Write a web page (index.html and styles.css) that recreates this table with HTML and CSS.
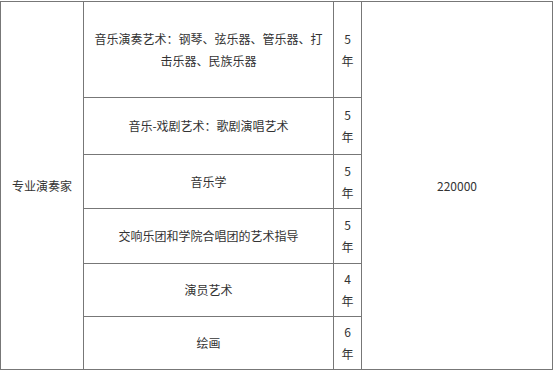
FILE: index.html
```html
<!DOCTYPE html>
<html lang="zh-CN">
<head>
<meta charset="utf-8">
<title>专业演奏家</title>
<link rel="stylesheet" href="styles.css">
</head>
<body>
<table class="tuition">
  <colgroup>
    <col class="c-cat">
    <col class="c-major">
    <col class="c-years">
    <col class="c-fee">
  </colgroup>
  <tbody>
    <tr class="r1">
      <td class="cat" rowspan="6">专业演奏家</td>
      <td class="major">音乐演奏艺术：钢琴、弦乐器、管乐器、打击乐器、民族乐器</td>
      <td class="years">5年</td>
      <td class="fee" rowspan="6">220000</td>
    </tr>
    <tr class="r2">
      <td class="major">音乐-戏剧艺术：歌剧演唱艺术</td>
      <td class="years">5年</td>
    </tr>
    <tr class="r3">
      <td class="major">音乐学</td>
      <td class="years">5年</td>
    </tr>
    <tr class="r4">
      <td class="major">交响乐团和学院合唱团的艺术指导</td>
      <td class="years">5年</td>
    </tr>
    <tr class="r5">
      <td class="major">演员艺术</td>
      <td class="years">4年</td>
    </tr>
    <tr class="r6">
      <td class="major">绘画</td>
      <td class="years">6年</td>
    </tr>
  </tbody>
</table>
</body>
</html>
```

FILE: styles.css
```css
html, body {
  margin: 0;
  padding: 0;
  background: #fff;
}

body {
  padding-top: 1px;
  font-family: "Noto Sans CJK SC", "Microsoft YaHei", sans-serif;
  font-size: 12px;
  color: #333;
}

.tuition {
  border-collapse: collapse;
  table-layout: fixed;
  width: 552px;
}

.c-cat { width: 83px; }
.c-major { width: 250px; }
.c-years { width: 28px; }
.c-fee { width: 191px; }

.tuition td {
  border: 1px solid #777;
  text-align: center;
  vertical-align: middle;
  line-height: 22px;
  padding: 0 8px;
}

.tuition td.years {
  padding: 0 7px;
  word-break: break-all;
}

.r1 { height: 96px; }
.r2 { height: 57px; }
.r3 { height: 54px; }
.r4 { height: 55px; }
.r5 { height: 53px; }
.r6 { height: 53px; }
```
